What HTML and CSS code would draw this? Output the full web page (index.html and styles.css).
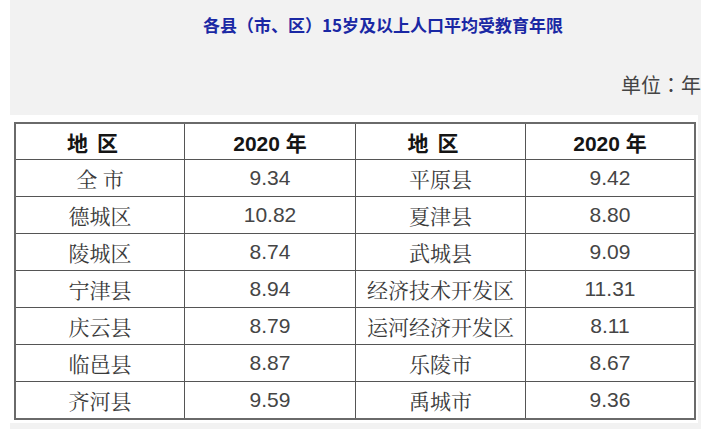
FILE: index.html
```html
<!DOCTYPE html>
<html lang="zh-CN">
<head>
<meta charset="utf-8">
<title>各县（市、区）15岁及以上人口平均受教育年限</title>
<link rel="stylesheet" href="styles.css">
</head>
<body>
<div class="panel">
  <h1 class="title">各县（市、区）15岁及以上人口平均受教育年限</h1>
  <p class="unit">单位<span class="colon" lang="ja">：</span>年</p>
  <div class="figure">
    <table class="data">
      <thead>
        <tr>
          <th class="c1 region">地 区</th>
          <th class="c2">2020 年</th>
          <th class="c3 region">地 区</th>
          <th class="c4">2020 年</th>
        </tr>
      </thead>
      <tbody>
        <tr><td class="name">全 市</td><td class="num">9.34</td><td class="name">平原县</td><td class="num">9.42</td></tr>
        <tr><td class="name">德城区</td><td class="num">10.82</td><td class="name">夏津县</td><td class="num">8.80</td></tr>
        <tr><td class="name">陵城区</td><td class="num">8.74</td><td class="name">武城县</td><td class="num">9.09</td></tr>
        <tr><td class="name">宁津县</td><td class="num">8.94</td><td class="name">经济技术开发区</td><td class="num">11.31</td></tr>
        <tr><td class="name">庆云县</td><td class="num">8.79</td><td class="name">运河经济开发区</td><td class="num">8.11</td></tr>
        <tr><td class="name">临邑县</td><td class="num">8.87</td><td class="name">乐陵市</td><td class="num">8.67</td></tr>
        <tr class="last"><td class="name">齐河县</td><td class="num">9.59</td><td class="name">禹城市</td><td class="num">9.36</td></tr>
      </tbody>
    </table>
  </div>
</div>
</body>
</html>
```

FILE: styles.css
```css
html, body {
  margin: 0;
  padding: 0;
  background: #ffffff;
}

body {
  font-family: "Noto Sans CJK SC", "Liberation Sans", sans-serif;
  overflow: hidden;
}

.panel {
  margin-left: 10px;
  background: #f2f2f2;
  padding-bottom: 20px;
}

.title {
  margin: 0;
  padding: 15px 0 0 193px;
  font-size: 17px;
  line-height: 20px;
  font-weight: bold;
  color: #1a28a4;
  font-family: "Noto Sans CJK SC", "Liberation Sans", sans-serif;
  white-space: nowrap;
}

.unit {
  margin: 38px 0 0 0;
  text-align: right;
  font-size: 20px;
  line-height: 24px;
  color: #444444;
  font-family: "Noto Sans CJK SC", sans-serif;
}

.colon {
  font-family: "Noto Sans CJK JP", "Noto Sans CJK TC", sans-serif;
}

.figure {
  margin-top: 18px;
  width: 688px;
  height: 308px;
  box-sizing: border-box;
  background: #ffffff;
  padding: 7px 0 0 4px;
}

.data {
  border-collapse: separate;
  border-spacing: 0;
  table-layout: fixed;
  width: 682px;
  border: 2px solid #6a6a6a;
}

.data th,
.data td {
  box-sizing: border-box;
  padding: 0;
  text-align: center;
  vertical-align: middle;
  border-right: 1px solid #555555;
  border-bottom: 1px solid #555555;
  height: 37px;
  font-size: 21px;
}

.data th:last-child,
.data td:last-child {
  border-right: none;
}

.data .last td {
  border-bottom: none;
  height: 36px;
}

.data th {
  height: 36px;
  color: #151515;
  font-weight: bold;
  font-family: "Liberation Sans", "Noto Sans CJK SC", sans-serif;
}

.data th.region {
  padding-right: 15px;
  word-spacing: 3px;
}

.c1 { width: 169px; }
.c2 { width: 171px; }
.c3 { width: 170px; }
.c4 { width: 168px; }

.name {
  color: #3a3a3a;
  font-family: "Noto Serif CJK SC", "Noto Sans CJK SC", serif;
}

.num {
  color: #454545;
  font-family: "Liberation Sans", sans-serif;
}
```
